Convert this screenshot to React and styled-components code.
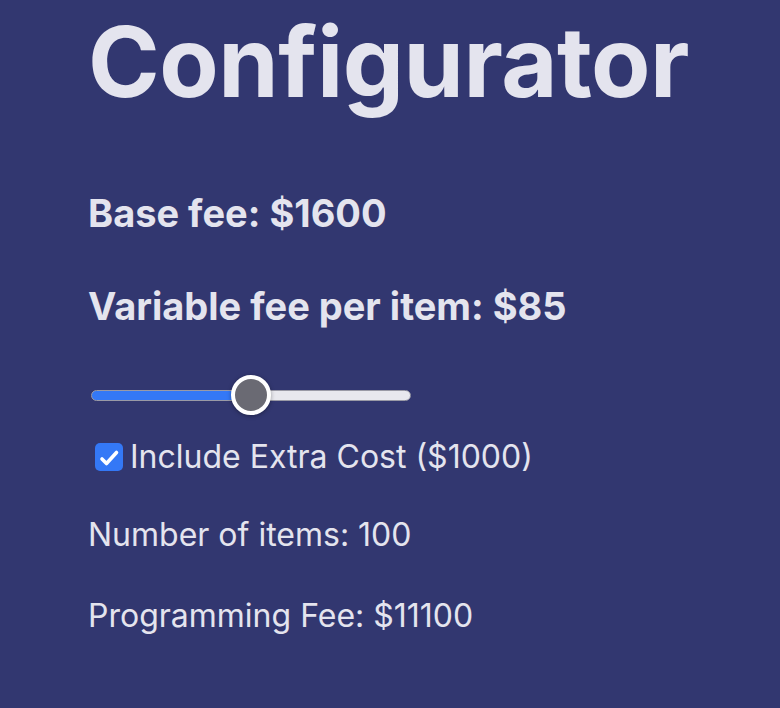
import React, { useState } from "react";
import styled, { createGlobalStyle } from "styled-components";

const Global = createGlobalStyle`
  html, body { margin: 0; padding: 0; background: #323770; }
  body { font-family: Inter, "Noto Sans", sans-serif; color: #e4e4ee; }
`;

const Page = styled.main`
  min-height: 708px;
  background: #323770;
  padding: 4px 0 0 88px;
  box-sizing: border-box;
  display: flex;
  flex-direction: column;
  align-items: flex-start;
`;

const Title = styled.h1`
  margin: 0;
  font-size: 97px;
  font-weight: 700;
  line-height: 116px;
  letter-spacing: -0.5px;
`;

const Fee = styled.h3`
  margin: ${(p) => p.$top}px 0 0;
  font-size: 38px;
  font-weight: 700;
  line-height: 46px;
`;

const Range = styled.input`
  -webkit-appearance: none;
  appearance: none;
  margin: 46px 0 0 3px;
  width: 320px;
  height: 40px;
  background: transparent;
  --pct: ${(p) => p.$pct}%;
  &::-webkit-slider-runnable-track {
    height: 11px;
    border-radius: 6px;
    box-sizing: border-box;
    border: 1px solid #9a9aa6;
    background: linear-gradient(to right, #3478f6 0, #3478f6 var(--pct), #e8e8ee var(--pct), #e8e8ee 100%);
  }
  &::-webkit-slider-thumb {
    -webkit-appearance: none;
    width: 40px;
    height: 40px;
    margin-top: -15.5px;
    border-radius: 50%;
    background: #6a6a73;
    border: 4px solid #ffffff;
    box-sizing: border-box;
    box-shadow: 0 1px 4px rgba(0, 0, 0, 0.35);
  }
`;

const CheckRow = styled.label`
  margin-top: 23px;
  display: flex;
  align-items: center;
  gap: 7px;
  font-size: 32px;
  line-height: 38px;
  padding-left: 7px;
  cursor: pointer;
`;

const Box = styled.span`
  width: 28px;
  height: 28px;
  border-radius: 5px;
  background: #3478f6;
  display: inline-flex;
  flex: none;
`;

const Hidden = styled.input`
  position: absolute;
  opacity: 0;
  width: 0;
  height: 0;
`;

const Line = styled.p`
  margin: ${(p) => p.$top}px 0 0;
  font-size: 32px;
  line-height: 38px;
`;

export default function App() {
  const [items, setItems] = useState(100);
  const [extra, setExtra] = useState(true);
  const base = 1600;
  const per = 85;
  const total = base + per * items + (extra ? 1000 : 0);
  return (
    <>
      <Global />
      <Page>
        <Title>Configurator</Title>
        <Fee $top={70}>Base fee: ${base}</Fee>
        <Fee $top={47}>Variable fee per item: ${per}</Fee>
        <Range
          type="range"
          min={0}
          max={200}
          value={items}
          $pct={(items / 200) * 100}
          onChange={(e) => setItems(Number(e.target.value))}
        />
        <CheckRow>
          <Hidden type="checkbox" checked={extra} onChange={(e) => setExtra(e.target.checked)} />
          <Box>
            {extra && (
              <svg width="28" height="28" viewBox="0 0 28 28">
                <path d="M7 16l4.5 4.5L21.5 9.5" fill="none" stroke="#fff" strokeWidth="3.6" strokeLinecap="round" strokeLinejoin="round" />
              </svg>
            )}
          </Box>
          Include Extra Cost ($1000)
        </CheckRow>
        <Line $top={40}>Number of items: {items}</Line>
        <Line $top={43}>Programming Fee: ${total}</Line>
      </Page>
    </>
  );
}
